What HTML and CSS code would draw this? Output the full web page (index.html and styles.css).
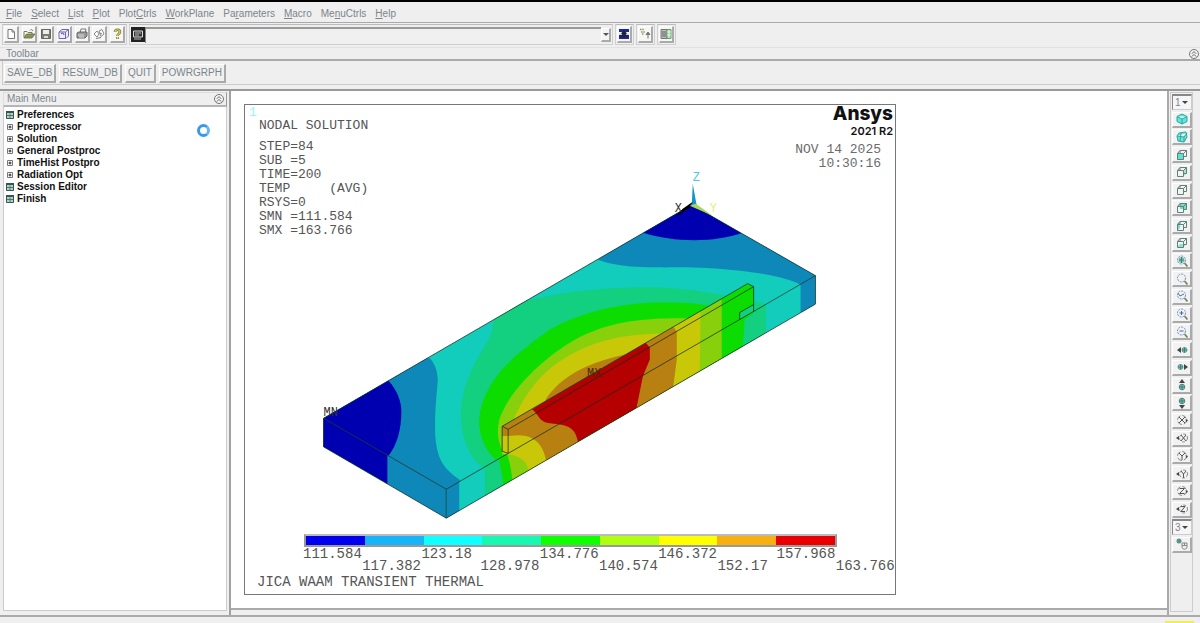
FILE: index.html
```html
<!DOCTYPE html>
<html lang="en">
<head>
<meta charset="utf-8">
<title>Ansys Nodal Solution</title>
<link rel="stylesheet" href="styles.css">
</head>
<body>
<svg class="defs" aria-hidden="true">
  <symbol id="cube" viewBox="0 0 12 12"><path d="M1.500 4.500h6v6h-6zM4 4.500V1.500h6.500v6H7.500M7.500 4.500l3-3M1.500 4.500L4 1.500" fill="none"/></symbol>
  <symbol id="lens" viewBox="0 0 12 12"><circle cx="5.500" cy="5" r="4" fill="none" stroke="#6d8fc0" stroke-dasharray="2 1"/><path d="M8.500 8l3 3.500" stroke="#7c8468" stroke-width="1.800"/></symbol>
  <symbol id="ball" viewBox="0 0 8 8"><circle cx="4" cy="4" r="2.800" fill="#6fcdb8" stroke="#5a8b83"/><path d="M4 1v6M1 4h6" stroke="#477"/></symbol>
  <symbol id="rot" viewBox="0 0 12 12"><circle cx="6" cy="6" r="4.500" fill="none" stroke="#888" stroke-dasharray="5 2"/><path d="M9.500 5l2.500 1-1.500 2.500z" fill="#444"/></symbol>
  <symbol id="rotb" viewBox="0 0 12 12"><path d="M0 6l3-2v4z" fill="#444"/><circle cx="7.500" cy="6" r="4" fill="none" stroke="#888" stroke-dasharray="3 1.500"/></symbol>
  <symbol id="collapse" viewBox="0 0 12 12"><circle cx="6" cy="6" r="4.500" fill="#f4f4f4" stroke="#777"/><path d="M3.800 5.800L6 3.600l2.200 2.200M3.800 8.600L6 6.400l2.200 2.200" fill="none" stroke="#666"/></symbol>
  <symbol id="sheet" viewBox="0 0 8 8"><path d="M.5.5h7v7h-7z" fill="#b5d0c9" stroke="#365650"/><path d="M0 0h8v2H0z" fill="#365650"/><path d="M1 4.500h6M4 2.500v5" stroke="#54776f"/></symbol>
  <symbol id="plus" viewBox="0 0 8 8"><path d="M1.500 1.500h5v5h-5z" fill="#fff" stroke="#777"/><path d="M2.500 4h3M4 2.500v3" stroke="#222"/></symbol>
</svg>

<nav class="menubar" aria-label="Application menu">
  <a href="#"><u>F</u>ile</a><a href="#"><u>S</u>elect</a><a href="#"><u>L</u>ist</a><a href="#"><u>P</u>lot</a><a href="#">Plot<u>C</u>trls</a><a href="#"><u>W</u>orkPlane</a><a href="#">Pa<u>r</u>ameters</a><a href="#"><u>M</u>acro</a><a href="#">Me<u>n</u>uCtrls</a><a href="#"><u>H</u>elp</a>
</nav>

<div class="toolstrip">
  <div class="group files">
    <button class="icon" aria-label="New"><svg viewBox="0 0 12 12"><path d="M3 1.500h4l2.500 2.500v6.500H3zM7 1.500V4h2.500" fill="#fff" stroke="#777"/></svg></button>
    <button class="icon" aria-label="Open"><svg viewBox="0 0 12 12"><path d="M1 9.500V3.500h3l1 1h4v1.500" fill="#fbfbd8" stroke="#777"/><path d="M1 10l2.500-4H12L9 10z" fill="#8c9455" stroke="#676b48" stroke-width=".8"/><path d="M7 2.500c1-1.500 2-1 3 .5" fill="none" stroke="#777"/></svg></button>
    <button class="icon" aria-label="Save"><svg viewBox="0 0 12 12"><path d="M1.500 1.500h9v9h-9z" fill="#777f68" stroke="#666"/><path d="M3 2h6v4H3z" fill="#eee"/><path d="M4 8h4v2H4z" fill="#ddd"/></svg></button>
    <button class="icon" aria-label="Pan zoom rotate"><svg viewBox="0 0 12 12"><path d="M1 4l3-2.500h6.500V8L8 10.500H1zM1 4h6.500v6M7.500 4l3-2.500" fill="#eef" stroke="#6c68b0"/><path d="M3 6c1-1.500 3-1 3 1" fill="none" stroke="#4a469a"/></svg></button>
    <button class="icon" aria-label="Print"><svg viewBox="0 0 12 12"><path d="M4 5l1-4h5L9 5" fill="#fff" stroke="#777"/><path d="M1 5l2-1h8v4L9 10H1z" fill="#999" stroke="#666"/><path d="M2 7h6M3 9h5" stroke="#ddd"/></svg></button>
    <button class="icon" aria-label="Report"><svg viewBox="0 0 12 12"><path d="M1 6l3-3 2 3-2 3zM6 3l3-1.500L11 6 8 8.500z" fill="#fff" stroke="#888"/><path d="M3 10.500l5-1M7 5l2 1" stroke="#777"/></svg></button>
    <button class="icon" aria-label="Help"><svg viewBox="0 0 12 12"><path d="M4 4c0-3 5-3 5 0 0 2-2.500 1.500-2.500 4M6.500 9v2" fill="none" stroke="#727240" stroke-width="2.600"/><path d="M4 4c0-3 5-3 5 0 0 2-2.500 1.500-2.500 4M6.500 9v2" fill="none" stroke="#d5d957" stroke-width="1.200"/></svg></button>
  </div>
  <div class="group combo">
    <button class="command" aria-label="Command window"><svg viewBox="0 0 12 12"><path d="M1.500 2h9v6h-9z" fill="#333" stroke="#ddd"/><path d="M3 4h6M3 6h4M2 10h7" stroke="#bbb"/></svg></button>
    <input class="prompt" type="text" aria-label="Command prompt">
    <button class="drop" aria-label="Command history"><svg viewBox="0 0 6 6"><path d="M0 2h6L3 5z" fill="#555"/></svg></button>
  </div>
  <div class="group"><button class="icon" aria-label="Raise hidden"><svg viewBox="0 0 12 12"><path d="M1 1h10v3H8v3h3v4H1V7h3V4H1z" fill="#20249a"/><path d="M3 5.500h6M6 2v8M2 8h8" stroke="#222" stroke-width="1.300"/><path d="M1 6h3M8 6h3" stroke="#c8c890"/></svg></button></div>
  <div class="group"><button class="icon" aria-label="Reset picking"><svg viewBox="0 0 12 12"><path d="M1 1.500h4M2 4h4M3 6h2" stroke="#8f9869" stroke-width="1.300" stroke-dasharray="1.500 .8"/><path d="M9 10.500V5M7 6.500L9 4l2 2.500z" fill="#777" stroke="#777"/></svg></button></div>
  <div class="group"><button class="icon" aria-label="Contact manager"><svg viewBox="0 0 12 12"><path d="M1 1.500h6v9H1z" fill="#bbb" stroke="#777"/><path d="M2 4h4M2 6h4M2 8h4" stroke="#666"/><path d="M7 1.500h4v9H7z" fill="#a8d8a8" stroke="#6a9c78"/><path d="M7 4h4M7 7h4M9 2v8" stroke="#dff0df"/></svg></button></div>
</div>

<div class="titlebar"><span>Toolbar</span><button class="fold" aria-label="Collapse toolbar"><svg><use href="#collapse"/></svg></button></div>
<div class="shortcuts"><button>SAVE_DB</button><button>RESUM_DB</button><button>QUIT</button><button>POWRGRPH</button></div>

<div class="workspace">
  <aside class="sidebar">
    <div class="sidebar-head"><span>Main Menu</span><button class="fold" aria-label="Collapse main menu"><svg><use href="#collapse"/></svg></button></div>
    <ul class="tree">
      <li><svg><use href="#sheet"/></svg><a href="#">Preferences</a></li>
      <li><svg><use href="#plus"/></svg><a href="#">Preprocessor</a></li>
      <li><svg><use href="#plus"/></svg><a href="#">Solution</a></li>
      <li><svg><use href="#plus"/></svg><a href="#">General Postproc</a></li>
      <li><svg><use href="#plus"/></svg><a href="#">TimeHist Postpro</a></li>
      <li><svg><use href="#plus"/></svg><a href="#">Radiation Opt</a></li>
      <li><svg><use href="#sheet"/></svg><a href="#">Session Editor</a></li>
      <li><svg><use href="#sheet"/></svg><a href="#">Finish</a></li>
    </ul>
    <span class="busy"></span>
  </aside>

  <main class="canvas">
    <section class="plot">
      <svg class="model" viewBox="245 105 650 490" preserveAspectRatio="xMidYMid meet" role="img" aria-label="Temperature contour plot">
        <defs>
          <clipPath id="top"><path d="M323 419L692 205 816 276 446 490z"/></clipPath>
          <clipPath id="front"><path d="M446 490L502 457V427L748 284 754 287V312L816 276V304.500L446 519z"/></clipPath>
        </defs>
        <g clip-path="url(#top)">
          <path d="M320 200H820V500H320z" fill="#12ccbc"/>
          <path d="M430 359C434 364 437 370 437.500 380C437 392 434 410 435 437C437 458 441 468 460 481L446 500 310 425 380 350z" fill="#0e88b8"/>
          <path d="M388 381C397 391 401 402 401 412C401 430 397 446 387 458L300 430 340 370z" fill="#0000b0"/>
          <path d="M598 260C625 270 655 267 703 268C745 270 785 276 801 285L830 276 692 190z" fill="#0e88b8"/>
          <path d="M643 233C675 243 715 243 743 233L692 190z" fill="#0000b0"/>
          <path d="M498 310L520 303C560 291 620 286 665 288C705 290 740 299 767 304L600 420 484 469C466 458 459 430 461 407C463 385 474 362 488 341C491 335 494 326 494 310z" fill="#12d080"/>
          <path d="M499 463C484 452 476 432 480 412C488 375 520 351 550 330C590 307 640 302 667 303C690 303 715 304 745 318L560 440z" fill="#0cdc00"/>
          <path d="M507 460C496 445 495 425 503 411C520 377 560 347 583 336C620 319 655 318 700 319L560 440z" fill="#88d00c"/>
          <path d="M507 440C513 417 525 391 550 369C585 341 625 333 675 334L560 440z" fill="#c8c808"/>
          <path d="M545 401C560 376 595 358 645 352L600 390z" fill="#b88010"/>
        </g>
        <path d="M323 419L446 490V519L323 447.500z" fill="#0e88b8"/>
        <path d="M323 419L387 456V484.500L323 447.500z" fill="#0000b0"/>
        <g clip-path="url(#front)">
          <path d="M440 260H820V530H440z" fill="#12ccbc"/>
          <path d="M440 470H459V530H440zM801 260H820V330H801z" fill="#0e88b8"/>
          <path d="M484 440H650L767 270 766 340 485 510z" fill="#12d080"/>
          <path d="M499 463L502 420 740 270H756V312L745 320 743 350 503 500C504 485 502 473 499 463z" fill="#0cdc00"/>
          <path d="M507 455V420L722 290V360L513 490C512 477 511 467 507 455z" fill="#88d00c"/>
          <path d="M500 455V420L701 300 700 375 529 480C530 466 524 457 508 455z" fill="#c8c808"/>
          <path d="M500 437V420L672 325 677 332V360L673 390 547 470C546 449 537 436 518 436z" fill="#b88010"/>
          <path d="M532 410L643 340 650 348V360L643 377 636 412 579 450C577 428 570 426 550 424C538 422 540 416 532 410z" fill="#b40000"/>
        </g>
        <path d="M754 305L740 313V320L754 312z" fill="#12d080"/>
        <path d="M323 419L692 205 816 276V304.500L446 519 323 447.500zL446 490 816 276M446 490V519M508 430L754 287 748 284 502 427zV454L502 452V427M754 287V312M740 320V313L754 305" fill="none" stroke="#102c20" stroke-opacity=".75"/>
        <path d="M693 184L697 206H692z" fill="#1494c8"/>
        <path d="M676 217L683 209 693 202 690 208z" fill="#000"/>
        <path d="M690 206L696 204 713 216z" fill="#a8d850"/>
        <g class="marks">
          <text x="693" y="181" fill="#56c5ea">Z</text><text x="675" y="212" fill="#333">X</text><text x="710" y="212" fill="#dcf27c">Y</text>
          <text x="323" y="417" fill="#333">MN</text><text x="587" y="378" fill="#4a2808">MX</text>
        </g>
      </svg>
      <span class="window-number">1</span>
      <div class="plot-head">
        <div class="info"><h1>NODAL SOLUTION</h1><pre>STEP=84
SUB =5
TIME=200
TEMP     (AVG)
RSYS=0
SMN =111.584
SMX =163.766</pre></div>
        <div class="stamp"><strong>Ansys</strong><b>2021 R2</b><p>NOV 14 2025<br>10:30:16</p></div>
      </div>
      <div class="plot-foot">
        <div class="scale"><i class="c1"></i><i class="c2"></i><i class="c3"></i><i class="c4"></i><i class="c5"></i><i class="c6"></i><i class="c7"></i><i class="c8"></i><i class="c9"></i></div>
        <div class="values"><span>111.584</span><span>117.382</span><span>123.18</span><span>128.978</span><span>134.776</span><span>140.574</span><span>146.372</span><span>152.17</span><span>157.968</span><span>163.766</span></div>
        <p class="caption">JICA WAAM TRANSIENT THERMAL</p>
      </div>
    </section>
  </main>

  <div class="views"><div class="views-bar">
    <label class="pick"><select aria-label="Active window"><option>1</option></select></label>
    <button aria-label="Isometric view"><svg viewBox="0 0 12 12"><path d="M6 1l5 2.500v5L6 11 1 8.500v-5zM1 3.500L6 6l5-2.500M6 6v5" fill="#62e5dd" stroke="#27a99e"/></svg></button>
    <button aria-label="Oblique view"><svg viewBox="0 0 12 12"><path d="M3 2l7-1 1 5-3 5-6-1-1-5zM1 5l7 1 3-4M8 6v5M5 2L4 10" fill="#70e5df" stroke="#2aa79d"/></svg></button>
    <button aria-label="Front view"><svg class="cube"><path d="M1 4h7v7H1z" fill="#63dfd2"/><use href="#cube"/></svg></button>
    <button aria-label="Right view"><svg class="cube"><path d="M8 4l3-3v6L8 10z" fill="#a4e5cf"/><use href="#cube"/></svg></button>
    <button aria-label="Top view"><svg class="cube"><use href="#cube"/></svg></button>
    <button aria-label="Back view"><svg class="cube"><path d="M4 1h7v6H4z" fill="#76dcc5"/><use href="#cube"/></svg></button>
    <button aria-label="Left view"><svg class="cube"><path d="M1 4l3-2v6L1 11z" fill="#79dccd"/><use href="#cube"/></svg></button>
    <button aria-label="Bottom view"><svg class="cube"><path d="M1 10l3-3h6l-3 4z" fill="#8ddfd0"/><use href="#cube"/></svg></button>
    <button aria-label="Fit view"><svg viewBox="0 0 12 12"><circle cx="5.500" cy="5" r="3" fill="#78c7b1"/><path d="M3 5h5M5.500 2v6" stroke="#467f72"/><use href="#lens"/></svg></button>
    <button aria-label="Zoom model"><svg><use href="#lens"/></svg></button>
    <button aria-label="Previous zoom"><svg viewBox="0 0 12 12"><path d="M2 3l2 3 4-2" fill="none" stroke="#4774a5"/><use href="#lens"/></svg></button>
    <button aria-label="Zoom in"><svg viewBox="0 0 12 12"><path d="M3.500 5h4M5.500 3v4" stroke="#4765a5"/><use href="#lens"/></svg></button>
    <button aria-label="Zoom out"><svg viewBox="0 0 12 12"><path d="M3.500 5h4" stroke="#4765a5"/><use href="#lens"/></svg></button>
    <button aria-label="Pan left"><svg viewBox="0 0 12 12"><path d="M1 6l4-3v6z" fill="#444"/><use href="#ball" x="5" y="2" width="7" height="8"/></svg></button>
    <button aria-label="Pan right"><svg viewBox="0 0 12 12"><path d="M12 6L8 3v6z" fill="#444"/><use href="#ball" x="1" y="2" width="7" height="8"/></svg></button>
    <button aria-label="Pan up"><svg viewBox="0 0 12 12"><path d="M6 0l3 4H3z" fill="#444"/><use href="#ball" x="2" y="4" width="8" height="8"/></svg></button>
    <button aria-label="Pan down"><svg viewBox="0 0 12 12"><path d="M6 12L3 8h6z" fill="#444"/><use href="#ball" x="2" y="0" width="8" height="8"/></svg></button>
    <button aria-label="Rotate X minus"><svg viewBox="0 0 12 12"><path d="M3 3l6 6M9 3L3 9" stroke="#555"/><use href="#rot"/></svg></button>
    <button aria-label="Rotate X plus"><svg viewBox="0 0 12 12"><path d="M5 3l5 6M10 3L5 9" stroke="#555"/><use href="#rotb"/></svg></button>
    <button aria-label="Rotate Y minus"><svg viewBox="0 0 12 12"><path d="M3 3l3 3 3-3M6 6v4" fill="none" stroke="#555"/><use href="#rot"/></svg></button>
    <button aria-label="Rotate Y plus"><svg viewBox="0 0 12 12"><path d="M5 3l2.500 3L10 3M7.500 6v4" fill="none" stroke="#555"/><use href="#rotb"/></svg></button>
    <button aria-label="Rotate Z minus"><svg viewBox="0 0 12 12"><path d="M3.500 3.500h5l-5 5h5" fill="none" stroke="#555"/><use href="#rot"/></svg></button>
    <button aria-label="Rotate Z plus"><svg viewBox="0 0 12 12"><path d="M5 3.500h4l-4 5h4" fill="none" stroke="#555"/><use href="#rotb"/></svg></button>
    <label class="pick"><select aria-label="Rotation rate"><option>3</option></select></label>
    <button aria-label="Dynamic model mode"><svg viewBox="0 0 12 12"><circle cx="3" cy="3" r="2.500" fill="#5f9287"/><path d="M6 5h5v4c0 3-5 3-5 0zM6 7.500h5M8.500 5v2" fill="#eee" stroke="#888"/></svg></button>
  </div></div>
</div>
<footer class="status"><span class="signal"></span></footer>
</body>
</html>
```
FILE: styles.css
```css
* { box-sizing: border-box; }
body {
  margin: 0;
  height: 100vh;
  min-height: 600px;
  display: flex;
  flex-direction: column;
  border-top: 2px solid #000;
  background: #efefef;
  color: #7b858b;
  font: 10px/12px "Liberation Sans", Arial, sans-serif;
  overflow: hidden;
}
a { color: inherit; text-decoration: none; }
button, input, select { font: inherit; color: inherit; padding: 0; margin: 0; border-radius: 0; }
svg { display: block; }
.defs { position: absolute; width: 0; height: 0; }

.menubar { display: flex; gap: 9px; padding: 6px 6px 2px; border-bottom: 1px solid #aaa; }

.toolstrip { display: flex; gap: 2px; padding: 1px 2px 2px; border-bottom: 1px solid #e2e2e2; }
.group { display: flex; align-items: center; height: 21px; padding: 1px; border: 1px solid #d0d0d0; border-top-color: #bbb; }
.files { flex: 0 0 125px; justify-content: space-between; }
.icon {
  display: grid;
  place-items: center;
  width: 15px;
  height: 17px;
  border: solid #fff;
  border-width: 1px 1px 2px 1px;
  border-right: 2px solid #aaa;
  border-bottom-color: #aaa;
  background: #f6f6f6;
}
.icon svg { width: 12px; height: 12px; }
.combo { flex: 0 1 484px; padding: 0 1px; }
.command { width: 14px; height: 15px; border: 0; background: #222; }
.command svg { width: 12px; height: 12px; margin: auto; }
.prompt { flex: 1; min-width: 0; height: 16px; border: 0; border-top: 2px solid #999; border-left: 1px solid #888; background: #f0f0f0; outline: 0; }
.drop { width: 10px; height: 14px; border: 1px solid #fff; border-right: 2px solid #aaa; border-bottom: 2px solid #aaa; background: #f4f4f4; }
.drop svg { width: 6px; height: 6px; margin: auto; }

.titlebar { display: flex; align-items: center; justify-content: space-between; height: 13px; padding-left: 6px; border-bottom: 2px solid #aaa; }
.fold { width: 12px; height: 12px; border: 0; background: none; }
.fold svg { width: 12px; height: 12px; }

.shortcuts { display: flex; gap: 3px; margin-left: 2px; padding: 3px 1px 1px; height: 24px; border-left: 1px solid #ccc; border-bottom: 1px solid #ccc; }
.shortcuts button { height: 19px; padding: 0 2px; border: 1px solid #fff; border-right: 2px solid #aaa; border-bottom: 2px solid #aaa; background: #f0f0f0; }

.workspace { flex: 1; min-height: 0; display: flex; margin-top: 4px; border-top: 2px solid #999; }
.sidebar { position: relative; flex: 0 0 231px; display: flex; flex-direction: column; padding: 1px 2px 4px 3px; border-right: 2px solid #a2a2a2; }
.sidebar-head { display: flex; align-items: center; justify-content: space-between; height: 15px; padding: 0 1px 0 3px; border: 1px solid #ddd; border-right: 1px solid #999; border-bottom: 2px solid #b5b5b5; }
.tree { flex: 1; margin: 0; padding: 2px; list-style: none; background: #fff; border: solid #ccc; border-width: 0 1px 1px; color: #111; font-weight: bold; }
.tree li { display: flex; align-items: center; gap: 3px; }
.tree svg { width: 8px; height: 8px; }
.busy { position: absolute; left: 197px; top: 33px; width: 13px; height: 13px; border: 3px solid #3a98e8; border-right-color: #62b6f5; border-radius: 50%; }

.canvas { flex: 1; min-width: 0; display: grid; grid-template-columns: 652fr 257fr; margin-bottom: 5px; padding: 13px 14px 13px 13px; background: #fff; border-bottom: 2px solid #aaa; }
.plot { position: relative; display: flex; flex-direction: column; justify-content: space-between; border: 1px solid #777; color: #555; font: 13px/14px "Liberation Mono", "Courier New", monospace; }
.model { position: absolute; inset: 0; width: 100%; height: 100%; }
.marks { font: 12px "Liberation Mono", monospace; }
.window-number { position: absolute; left: 4px; top: 1px; color: #9cf3f7; }
.plot-head { position: relative; display: flex; justify-content: space-between; }
.info { padding: 14px; }
.info h1 { margin: 0 0 7px; font: inherit; }
.info pre { margin: 0; font: inherit; }
.stamp { display: flex; flex-direction: column; align-items: flex-end; padding-right: 2px; color: #111; font-family: Inter, "Open Sans", sans-serif; }
.stamp strong { font-size: 19px; line-height: 18px; font-weight: 800; }
.stamp b { font-size: 11px; line-height: 16px; font-weight: 600; }
.stamp p { margin: 4px 12px 0 0; color: #6b6b6b; font-family: "Liberation Mono", monospace; text-align: right; }

.plot-foot { position: relative; padding: 0 0 5px; font-size: 14px; }
.scale { display: grid; grid-template-columns: repeat(9, 1fr); height: 13px; margin: 0 58px 0 59px; border: 2px solid #999; border-top-color: #bbb; }
.c1 { background: #0000ee; } .c2 { background: #18b4f8; } .c3 { background: #10ffff; }
.c4 { background: #18f8b0; } .c5 { background: #10ff00; } .c6 { background: #b0ff10; }
.c7 { background: #ffff00; } .c8 { background: #f8b010; } .c9 { background: #e80000; }
.values { display: grid; grid-template-columns: repeat(10, 1fr); margin: 1px 0 0 58px; line-height: 12px; }
.values span:nth-child(even) { padding-top: 12px; }
.caption { margin: 3px 0 0 12px; }

.views { flex: 0 0 33px; padding: 1px 7px 3px 1px; border-left: 2px solid #aaa; display: flex; }
.views-bar { flex: 1; display: flex; flex-direction: column; justify-content: space-between; padding: 1px 0 58px 1px; border: 1px solid #ccc; }
.views button { display: grid; place-items: center; height: 16px; border: 1px solid #fff; border-right: 2px solid #aaa; border-bottom: 2px solid #aaa; background: #f2f2f2; }
.views svg { width: 12px; height: 12px; }
.cube { stroke: #62807b; stroke-width: 1; }
.cube path { stroke: none; }
.pick { position: relative; height: 16px; }
.pick select { display: block; width: 100%; height: 16px; padding-left: 2px; appearance: none; border: 1px solid #888; border-top-width: 2px; border-right-color: #ccc; border-bottom-color: #ccc; background: #f6f6f6; }
.pick::after { content: ""; position: absolute; right: 4px; top: 7px; border: 3px solid transparent; border-top: 3px solid #444; border-bottom: 0; pointer-events: none; }

.status { display: flex; align-items: flex-end; justify-content: flex-end; height: 8px; padding-right: 6px; border-top: 2px solid #aaa; }
.signal { width: 29px; height: 2px; background: #f0ee50; }
```
